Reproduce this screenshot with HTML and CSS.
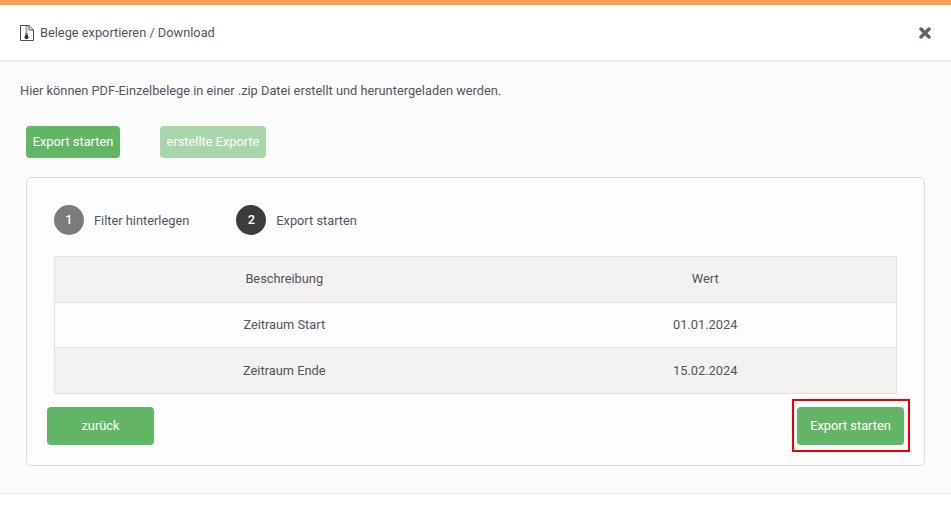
FILE: index.html
```html
<!DOCTYPE html>
<html lang="de">
<head>
<meta charset="utf-8">
<title>Belege exportieren / Download</title>
<link rel="stylesheet" href="styles.css">
</head>
<body>
<div class="modal">
  <header class="modal-head">
    <div class="title">
      <svg class="file-icon" width="14" height="16" viewBox="0 0 14 16" aria-hidden="true">
        <path d="M.5.5H9L13.500 5V15.500H.5Z" fill="#fff" stroke="#4a4a66" stroke-width="1"/>
        <path d="M9 .5V5H13.500" fill="none" stroke="#4a4a66" stroke-width="1"/>
        <path d="M5.500 1.500h2v1h-2zM5.500 3.500h2v1h-2zM5.500 5.500h2v1h-2zM5.500 7.500h2v2h-2z" fill="#55556a"/>
        <path d="M5.400 9.500h2.200l.9 2.800a2 2 0 1 1-4 0Z" fill="#33334a"/>
      </svg>
      <span>Belege exportieren / Download</span>
    </div>
    <svg class="close" width="12" height="12" viewBox="0 0 12 12" aria-hidden="true">
      <path d="M2 2L10 10M10 2L2 10" stroke="#5d6066" stroke-width="3.400" stroke-linecap="round"/>
    </svg>
  </header>
  <main class="modal-body">
    <p class="intro">Hier können PDF-Einzelbelege in einer .zip Datei erstellt und heruntergeladen werden.</p>
    <div class="tabs">
      <button class="btn btn-small btn-start">Export starten</button>
      <button class="btn btn-small btn-faded">erstellte Exporte</button>
    </div>
    <section class="card">
      <div class="steps">
        <div class="step"><span class="dot dot-done">1</span><span>Filter hinterlegen</span></div>
        <div class="step"><span class="dot dot-active">2</span><span>Export starten</span></div>
      </div>
      <table class="data">
        <colgroup><col class="col-a"><col></colgroup>
        <thead>
          <tr><th>Beschreibung</th><th>Wert</th></tr>
        </thead>
        <tbody>
          <tr class="plain"><td>Zeitraum Start</td><td>01.01.2024</td></tr>
          <tr class="alt"><td>Zeitraum Ende</td><td>15.02.2024</td></tr>
        </tbody>
      </table>
      <div class="actions">
        <button class="btn btn-large">zurück</button>
        <div class="highlight"><button class="btn btn-large">Export starten</button></div>
      </div>
    </section>
  </main>
</div>
</body>
</html>
```

FILE: styles.css
```css
* { box-sizing: border-box; }
html, body { margin: 0; height: 100%; background: #fff; }
body {
  font-family: Roboto, "Liberation Sans", sans-serif;
  font-size: 12.8px;
  color: #4f5660;
  overflow: hidden;
}
.modal { border-top: 5px solid #ff9f55; }
.modal-head {
  height: 57px;
  padding: 0 20px;
  background: #fff;
  border-bottom: 2px solid #eeeeee;
  display: flex;
  align-items: center;
  justify-content: space-between;
}
.title { display: flex; align-items: center; gap: 6px; }
.file-icon { flex: none; }
.close { margin-top: 1px; }
.modal-body {
  height: 432px;
  padding: 21px 26px 0;
  background: #fcfcfc;
  border-bottom: 1px solid #e6e6e6;
}
.intro { margin: 0 0 0 -6px; line-height: 16px; }
.tabs { display: flex; gap: 40px; margin-top: 27px; }
.btn {
  display: block;
  border: 0;
  border-radius: 4px;
  background: #63b666;
  color: #fff;
  font: 450 12.8px Roboto, "Liberation Sans", sans-serif;
  padding: 0 0 2px;
}
.btn-small { height: 32px; padding: 0 0 2px; }
.btn-start { width: 94px; }
.btn-faded { width: 106px; background: #a9d6aa; }
.btn-large { height: 38px; width: 107px; }
.card {
  margin-top: 19px;
  width: 899px;
  height: 289px;
  background: #fdfdfd;
  border: 1px solid #dddddd;
  border-radius: 5px;
  padding: 27px 27px 0;
}
.steps { display: flex; gap: 47px; height: 30px; }
.step { display: flex; align-items: center; gap: 10px; }
.dot {
  width: 30px;
  height: 30px;
  border-radius: 50%;
  color: #fff;
  font-weight: 500;
  display: flex;
  align-items: center;
  justify-content: center;
  padding-bottom: 1px;
}
.dot-done { background: #7b7b7b; }
.dot-active { background: #3c3c3c; }
.data {
  margin-top: 21px;
  width: 843px;
  border-collapse: collapse;
  table-layout: fixed;
  text-align: center;
}
.col-a { width: 461px; }
.data th, .data td {
  font-weight: 400;
  border: 1px solid #e2e2e2;
  padding: 0 2px 2px 0;
}
.data th { background: #f3f2f1; height: 46px; }
.data .plain td { background: #fdfdfd; height: 45px; }
.data tr > :first-child { border-right: 0; }
.data tr > :last-child { border-left: 0; padding-right: 1px; }
.data .alt td { background: #f3f2f1; height: 46px; padding-bottom: 0; }
.actions {
  display: flex;
  justify-content: space-between;
  align-items: flex-start;
  margin: 5px -7px 0 -7px;
}
.actions > .btn { margin-top: 8px; }
.highlight {
  width: 118px;
  height: 53px;
  margin-right: -6px;
  border: 2px solid #ee0000;
  padding: 6px 4px 0 3px;
}
```
